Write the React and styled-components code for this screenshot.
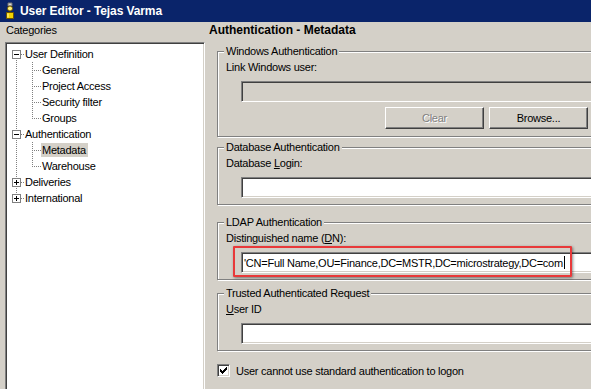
import React from 'react';
import styled, { createGlobalStyle } from 'styled-components';

const GlobalStyle = createGlobalStyle`
  html, body { margin: 0; padding: 0; background: #D4D0C8; }
  body { font-family: "Liberation Sans", Arial, sans-serif; }
`;

const Window = styled.div`
  width: 591px;
  height: 389px;
  overflow: hidden;
  background: #d4d0c8;
  display: flex;
  flex-direction: column;
  font-family: "Liberation Sans", Arial, sans-serif;
  font-size: 11px;
  letter-spacing: -0.25px;
  color: #000;
`;

const TitleBar = styled.div`
  height: 22px;
  flex: none;
  background: #0a246a;
  display: flex;
  align-items: center;
  gap: 4px;
  padding-left: 4px;
`;

const TitleText = styled.span`
  color: #fff;
  font-weight: bold;
  font-size: 12px;
  letter-spacing: -0.1px;
`;

const Body = styled.div`
  flex: 1;
  min-height: 0;
  display: flex;
`;

const LeftPane = styled.div`
  width: 205px;
  flex: none;
  display: flex;
  flex-direction: column;
  padding-left: 5px;
  box-sizing: border-box;
`;

const PaneLabel = styled.div`
  height: 20px;
  line-height: 16px;
  padding-left: 1px;
  flex: none;
`;

const TreeBox = styled.div`
  width: 200px;
  height: 380px;
  flex: none;
  box-sizing: border-box;
  background: #fff;
  border: 1px solid;
  border-color: #808080 #fff #fff #808080;
  box-shadow: inset 1px 1px #404040, inset -1px -1px #d4d0c8;
  padding: 3px 0 0 1px;
`;

const TreeRow = styled.div`
  display: flex;
  align-items: center;
  height: 16px;
`;

const Connector = styled.svg`
  flex: none;
  display: block;
`;

const TreeLabel = styled.span`
  height: 14px;
  line-height: 14px;
  padding: 0 2px 0 1px;
  white-space: nowrap;
  background: ${(p) => (p.$selected ? '#d4d0c8' : 'transparent')};
`;

const RightPane = styled.div`
  flex: 1;
  min-width: 0;
  display: flex;
  flex-direction: column;
`;

const Header = styled.div`
  height: 23px;
  flex: none;
  line-height: 16px;
  padding-left: 4px;
  font-weight: bold;
  font-size: 12px;
  letter-spacing: 0;
`;

const GroupBox = styled.fieldset`
  margin: ${(p) => p.$top}px 0 0 12px;
  width: 380px;
  min-width: 0;
  flex: none;
  box-sizing: border-box;
  border: 1px solid #808080;
  box-shadow: inset 1px 1px #fff, 1px 1px #fff;
  padding: 0 8px ${(p) => p.$bottom}px 8px;
`;

const Legend = styled.legend`
  padding: 0 2px;
  margin-left: -2px;
  line-height: 13px;
  background: #d4d0c8;
`;

const FieldLabel = styled.div`
  margin-top: 2px;
  line-height: 14px;
`;

const TextBox = styled.div`
  position: relative;
  margin: 7px 0 0 15px;
  width: 370px;
  height: 21px;
  box-sizing: border-box;
  background: ${(p) => (p.$disabled ? '#d4d0c8' : '#fff')};
  border: 1px solid;
  border-color: #808080 #fff #fff #808080;
  box-shadow: inset 1px 1px #404040, inset -1px -1px #d4d0c8;
  padding: 0 2px;
  display: flex;
  align-items: center;
  white-space: nowrap;
`;

const Caret = styled.span`
  display: inline-block;
  width: 1px;
  height: 13px;
  background: #000;
  margin-left: 1px;
`;

const Highlight = styled.div`
  position: absolute;
  left: -9px;
  top: -7px;
  width: 339px;
  height: 31px;
  box-sizing: border-box;
  border: 2px solid #e8393a;
  border-radius: 1px;
  box-shadow: 1px 1px 3px rgba(0, 0, 0, 0.45);
  pointer-events: none;
`;

const ButtonRow = styled.div`
  margin-top: 5px;
  display: flex;
  justify-content: flex-end;
  gap: 5px;
`;

const Button = styled.button`
  width: 99px;
  height: 22px;
  box-sizing: border-box;
  padding: 0;
  background: #d4d0c8;
  border: 1px solid;
  border-color: #fff #404040 #404040 #fff;
  box-shadow: inset -1px -1px #808080;
  font-family: inherit;
  font-size: 11px;
  letter-spacing: -0.25px;
  color: ${(p) => (p.disabled ? '#808080' : '#000')};
  text-shadow: ${(p) => (p.disabled ? '1px 1px #fff' : 'none')};
`;

const CheckRow = styled.div`
  margin: 13px 0 0 12px;
  display: flex;
  align-items: center;
  gap: 6px;
  height: 13px;
`;

const CheckBox = styled.span`
  width: 13px;
  height: 13px;
  box-sizing: border-box;
  flex: none;
  background: #fff;
  border: 1px solid;
  border-color: #808080 #fff #fff #808080;
  box-shadow: inset 1px 1px #404040, inset -1px -1px #d4d0c8;
  display: flex;
  align-items: center;
  justify-content: center;
`;

const UserIcon = () => (
  <svg width="12" height="18" viewBox="0 0 12 18">
    <path d="M4 1h4v3H4z" fill="#d8d8d8" stroke="#707070" strokeWidth="1" />
    <circle cx="6" cy="6.5" r="2.5" fill="#fff27a" stroke="#6b5200" />
    <path d="M2.5 10.5h7v6h-7z" fill="#f2d200" stroke="#6b5200" />
    <path d="M4 11.5v4" stroke="#fff8b0" />
  </svg>
);

const DOT = '#808080';

const RootConnector = ({ first, last, expanded }) => (
  <Connector width="17" height="16" viewBox="0 0 17 16" shapeRendering="crispEdges">
    <line
      x1="9.5"
      x2="9.5"
      y1={first ? 8 : 0}
      y2={last ? 8 : 16}
      stroke={DOT}
      strokeDasharray="1 1"
    />
    <line x1="14" x2="17" y1="8.5" y2="8.5" stroke={DOT} strokeDasharray="1 1" />
    <rect x="5.5" y="4.5" width="8" height="8" fill="#fff" stroke="#808080" />
    <line x1="7" x2="12" y1="8.5" y2="8.5" stroke="#000" />
    {!expanded && <line x1="9.5" x2="9.5" y1="6" y2="11" stroke="#000" />}
  </Connector>
);

const ChildConnector = ({ lastChild }) => (
  <Connector width="34" height="16" viewBox="0 0 34 16" shapeRendering="crispEdges">
    <line x1="9.5" x2="9.5" y1="0" y2="16" stroke={DOT} strokeDasharray="1 1" />
    <line
      x1="25.5"
      x2="25.5"
      y1="0"
      y2={lastChild ? 9 : 16}
      stroke={DOT}
      strokeDasharray="1 1"
    />
    <line x1="27" x2="34" y1="8.5" y2="8.5" stroke={DOT} strokeDasharray="1 1" />
  </Connector>
);

const CheckMark = () => (
  <svg width="9" height="9" viewBox="0 0 9 9" shapeRendering="crispEdges">
    <path
      d="M1 3h1v1h1v1h1V4h1V3h1V2h1V1h1v3H7v1H6v1H5v1H4v1H3V7H2V6H1z"
      fill="#000"
    />
  </svg>
);

const tree = [
  { label: 'User Definition', level: 0, expanded: true, first: true },
  { label: 'General', level: 1 },
  { label: 'Project Access', level: 1 },
  { label: 'Security filter', level: 1 },
  { label: 'Groups', level: 1, lastChild: true },
  { label: 'Authentication', level: 0, expanded: true },
  { label: 'Metadata', level: 1, selected: true },
  { label: 'Warehouse', level: 1, lastChild: true },
  { label: 'Deliveries', level: 0, expanded: false },
  { label: 'International', level: 0, expanded: false, last: true },
];

export default function App() {
  return (
    <>
      <GlobalStyle />
      <Window>
        <TitleBar>
          <UserIcon />
          <TitleText>User Editor - Tejas Varma</TitleText>
        </TitleBar>
        <Body>
          <LeftPane>
            <PaneLabel>Categories</PaneLabel>
            <TreeBox>
              {tree.map((n) => (
                <TreeRow key={n.label}>
                  {n.level === 0 ? (
                    <RootConnector first={n.first} last={n.last} expanded={n.expanded} />
                  ) : (
                    <ChildConnector lastChild={n.lastChild} />
                  )}
                  <TreeLabel $selected={n.selected}>{n.label}</TreeLabel>
                </TreeRow>
              ))}
            </TreeBox>
          </LeftPane>
          <RightPane>
            <Header>Authentication - Metadata</Header>

            <GroupBox $top={0} $bottom={7}>
              <Legend>Windows Authentication</Legend>
              <FieldLabel>Link Windows user:</FieldLabel>
              <TextBox $disabled />
              <ButtonRow>
                <Button disabled>Clear</Button>
                <Button>Browse...</Button>
              </ButtonRow>
            </GroupBox>

            <GroupBox $top={4} $bottom={6}>
              <Legend>Database Authentication</Legend>
              <FieldLabel>
                Database <u>L</u>ogin:
              </FieldLabel>
              <TextBox />
            </GroupBox>

            <GroupBox $top={11} $bottom={6}>
              <Legend>LDAP Authentication</Legend>
              <FieldLabel>
                Distinguished name (<u>D</u>N):
              </FieldLabel>
              <TextBox>
                'CN=Full Name,OU=Finance,DC=MSTR,DC=microstrategy,DC=com
                <Caret />
                <Highlight />
              </TextBox>
            </GroupBox>

            <GroupBox $top={7} $bottom={6}>
              <Legend>Trusted Authenticated Request</Legend>
              <FieldLabel>
                <u>U</u>ser ID
              </FieldLabel>
              <TextBox />
            </GroupBox>

            <CheckRow>
              <CheckBox>
                <CheckMark />
              </CheckBox>
              <span>User cannot use standard authentication to logon</span>
            </CheckRow>
          </RightPane>
        </Body>
      </Window>
    </>
  );
}
